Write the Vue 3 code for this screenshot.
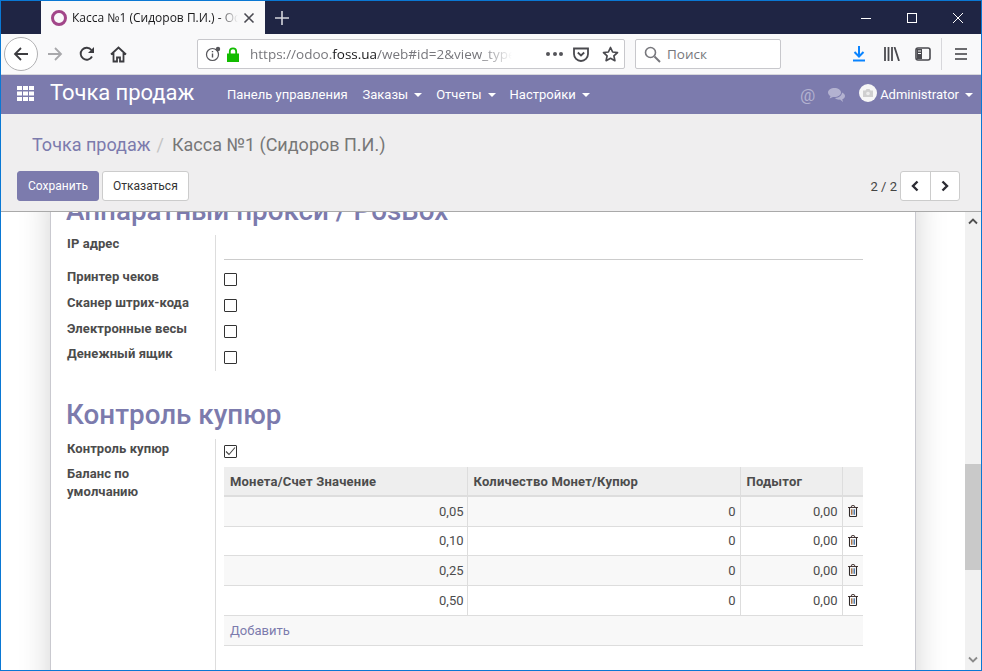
<script setup>
const menus = ['Заказы', 'Отчеты', 'Настройки']
const toggles = ['Принтер чеков', 'Сканер штрих-кода', 'Электронные весы', 'Денежный ящик']
const coins = [
  { value: '0,05', count: '0', total: '0,00' },
  { value: '0,10', count: '0', total: '0,00' },
  { value: '0,25', count: '0', total: '0,00' },
  { value: '0,50', count: '0', total: '0,00' }
]
</script>

<template>
  <div class="window">
    <div class="tabbar">
      <div class="tab">
        <span class="favicon"></span>
        <span class="tab-title">Касса №1 (Сидоров П.И.) - Odoo</span>
        <svg class="tab-close" width="12" height="12" viewBox="0 0 12 12"><path d="M1.5 1.5l9 9M10.5 1.5l-9 9" stroke="#4a4a52" stroke-width="1.6" fill="none"/></svg>
      </div>
      <svg class="tab-new" width="14" height="14" viewBox="0 0 14 14"><path d="M7 0v14M0 7h14" stroke="#d4d5dc" stroke-width="1.6" fill="none"/></svg>
      <div class="win-controls">
        <svg width="12" height="12" viewBox="0 0 12 12"><path d="M1 6.500h10" stroke="#fff" fill="none"/></svg>
        <svg width="12" height="12" viewBox="0 0 12 12"><rect x="1.5" y="1.5" width="9" height="9" stroke="#fff" fill="none"/></svg>
        <svg width="12" height="12" viewBox="0 0 12 12"><path d="M1 1l10 10M11 1L1 11" stroke="#fff" fill="none"/></svg>
      </div>
    </div>

    <div class="toolbar">
      <button class="back">
        <svg width="16" height="16" viewBox="0 0 16 16"><path d="M15 8H2M8 2L2 8l6 6" stroke="#3c3c40" stroke-width="1.8" fill="none"/></svg>
      </button>
      <svg class="forward" width="16" height="16" viewBox="0 0 16 16"><path d="M1 8h13M8 2l6 6-6 6" stroke="#a8a8ab" stroke-width="1.8" fill="none"/></svg>
      <svg class="reload" width="16" height="16" viewBox="0 0 16 16"><path d="M13 10.5A6 6 0 1 1 12.4 4" stroke="#3c3c40" stroke-width="1.9" fill="none"/><path d="M15 1v6H9z" fill="#3c3c40"/></svg>
      <svg class="home" width="17" height="17" viewBox="0 0 17 17"><path d="M1 8.500L8.500 1.500 16 8.500M3.500 7v8.500h3.500v-4h3v4h3.500V7" stroke="#3c3c40" stroke-width="1.800" fill="none"/></svg>

      <div class="urlbar">
        <svg class="info" width="16" height="16" viewBox="0 0 16 16"><circle cx="7.500" cy="8.500" r="6" stroke="#55555a" stroke-width="1.200" fill="none"/><path d="M7.500 7.500v4M7.500 5v1.300" stroke="#55555a" stroke-width="1.400"/><circle cx="13" cy="3" r="2.200" fill="#55555a"/></svg>
        <svg class="lock" width="14" height="15" viewBox="0 0 14 15"><path d="M1 6.500h12V15H1z" fill="#12bc00"/><path d="M3.800 7V4.500a3.200 3.200 0 0 1 6.400 0V7" stroke="#12bc00" stroke-width="1.800" fill="none"/></svg>
        <span class="url">https://odoo.<b>foss.ua</b>/web#id=2&amp;view_type=form</span>
        <span class="dots"><i></i><i></i><i></i></span>
        <svg class="pocket" width="16" height="15" viewBox="0 0 16 15"><path d="M1 1.500h14v5.500a7 7 0 0 1-14 0z" stroke="#4a4a4f" stroke-width="1.800" fill="none"/><path d="M4.800 5.500L8 8.500l3.200-3" stroke="#4a4a4f" stroke-width="1.800" fill="none"/></svg>
        <svg class="star" width="17" height="16" viewBox="0 0 17 16"><path d="M8.500 1.500l2.100 4.500 4.900.6-3.600 3.300 1 4.800-4.400-2.400-4.400 2.400 1-4.800L1.500 6.600l4.900-.6z" stroke="#4a4a4f" stroke-width="1.700" fill="none" stroke-linejoin="round"/></svg>
      </div>

      <div class="searchbar">
        <svg width="17" height="17" viewBox="0 0 17 17"><circle cx="6.500" cy="6.500" r="5" stroke="#77777c" stroke-width="1.600" fill="none"/><path d="M10.500 10.500L16 16" stroke="#77777c" stroke-width="2" fill="none"/></svg>
        <span>Поиск</span>
      </div>

      <svg class="download" width="14" height="16" viewBox="0 0 14 16"><path d="M7 0v10M2.500 6L7 10.500 11.500 6" stroke="#0a84ff" stroke-width="2" fill="none"/><path d="M1 14.500h12" stroke="#0a84ff" stroke-width="2" fill="none"/></svg>
      <svg class="library" width="16" height="14" viewBox="0 0 16 14"><path d="M1 0v14M4.500 0v14M8 0v14M10.500 0L15 14" stroke="#4a4a4f" stroke-width="1.800" fill="none"/></svg>
      <svg class="sidebar" width="16" height="14" viewBox="0 0 16 14"><rect x="1" y="1" width="14" height="12" rx="2" stroke="#4a4a4f" stroke-width="1.600" fill="none"/><path d="M2 2h5v10H2z" fill="#4a4a4f"/><path d="M3 4h3M3 6.500h3" stroke="#f9f9fa"/></svg>
      <span class="tool-divider"></span>
      <svg class="burger" width="12" height="12" viewBox="0 0 12 12"><path d="M0 1h12M0 6h12M0 11h12" stroke="#3c3c40" stroke-width="1.700" fill="none"/></svg>
    </div>

    <nav class="navbar">
      <svg class="apps" width="17" height="15" viewBox="0 0 17 15">
        <g fill="#fff">
          <rect x="0" y="0" width="5" height="4" /><rect x="6" y="0" width="5" height="4" /><rect x="12" y="0" width="5" height="4" />
          <rect x="0" y="5.500" width="5" height="4" /><rect x="6" y="5.500" width="5" height="4" /><rect x="12" y="5.500" width="5" height="4" />
          <rect x="0" y="11" width="5" height="4" /><rect x="6" y="11" width="5" height="4" /><rect x="12" y="11" width="5" height="4" />
        </g>
      </svg>
      <span class="brand">Точка продаж</span>
      <a class="nav-link dashboard">Панель управления</a>
      <a v-for="m in menus" :key="m" class="nav-link">{{ m }}<i class="caret"></i></a>
      <div class="nav-right">
        <span class="at">@</span>
        <svg class="chat" width="17" height="14" viewBox="0 0 17 14"><path d="M6.500 0C3 0 0 1.900 0 4.500 0 6 1 7.300 2.500 8.100L1.500 10.500 5 8.900c.5.100 1 .100 1.500.100 3.500 0 6.500-2 6.500-4.500S10 0 6.500 0z" fill="#b3b2d0"/><path d="M14 4.500c0 3-3 5.300-7 5.500.9 1 2.500 1.700 4.200 1.700l.800-.1L15 14l-.700-2.800c1.600-.7 2.700-1.900 2.700-3.300 0-1.400-1.200-2.700-3-3.400z" fill="#b3b2d0"/></svg>
        <span class="avatar"><svg width="10" height="8" viewBox="0 0 10 8"><path d="M0 1.500h2.500L3.500 0h3l1 1.500H10V8H0z" fill="#cfcfcf"/><circle cx="5" cy="4.500" r="1.800" fill="#ececec"/></svg></span>
        <span class="user">Administrator<i class="caret"></i></span>
      </div>
    </nav>

    <div class="control-panel">
      <div class="breadcrumb">
        <a>Точка продаж</a><span class="slash">/</span><span class="current">Касса №1 (Сидоров П.И.)</span>
      </div>
      <div class="cp-row">
        <button class="btn primary">Сохранить</button>
        <button class="btn">Отказаться</button>
        <span class="pager-label">2 / 2</span>
        <div class="pager">
          <button><svg width="10" height="12" viewBox="0 0 10 12"><path d="M7.500 1.500L3 6l4.500 4.500" stroke="#2b2b33" stroke-width="2.400" fill="none"/></svg></button>
          <button><svg width="10" height="12" viewBox="0 0 10 12"><path d="M2.500 1.500L7 6l-4.500 4.500" stroke="#2b2b33" stroke-width="2.400" fill="none"/></svg></button>
        </div>
      </div>
    </div>

    <div class="content">
      <div class="scroll-area">
        <div class="sheet">
          <h2 class="first-title">Аппаратный прокси / PosBox</h2>
          <div class="group">
            <div class="row ip-row">
              <label>IP адрес</label>
              <div class="ip-input"></div>
            </div>
            <div v-for="t in toggles" :key="t" class="row check-row">
              <label>{{ t }}</label>
              <div class="field"><span class="check"></span></div>
            </div>
          </div>

          <h2 class="second-title">Контроль купюр</h2>
          <div class="group">
            <div class="row check-row control-row">
              <label>Контроль купюр</label>
              <div class="field">
                <span class="check">
                  <svg width="11" height="11" viewBox="0 0 11 11"><path d="M1 5.500L4 8.500 10 1.500" stroke="#444" stroke-width="1.100" fill="none"/></svg>
                </span>
              </div>
            </div>
            <div class="row table-row">
              <label>Баланс по умолчанию</label>
              <div class="table-wrap">
                <table>
                  <thead>
                    <tr>
                      <th class="c1">Монета/Счет Значение</th>
                      <th class="c2">Количество Монет/Купюр</th>
                      <th class="c3">Подытог</th>
                      <th class="c4"></th>
                    </tr>
                  </thead>
                  <tbody>
                    <tr v-for="c in coins" :key="c.value">
                      <td>{{ c.value }}</td>
                      <td>{{ c.count }}</td>
                      <td>{{ c.total }}</td>
                      <td class="trash">
                        <svg width="10" height="12" viewBox="0 0 10 12"><path d="M0 2.500h10M3 2.300L3.800.6h2.400L7 2.300" stroke="#4a3a38" stroke-width="1" fill="none"/><path d="M1.500 2.500v8.200c0 .5.300.8.800.8h5.400c.5 0 .8-.3.800-.8V2.500" stroke="#2f2a2a" stroke-width="1.100" fill="none"/><path d="M3.500 4.300v5.500" stroke="#b5743f" stroke-width="1"/><path d="M5 4.300v5.500" stroke="#6a6a70" stroke-width="1"/><path d="M6.500 4.300v5.500" stroke="#4c7fb5" stroke-width="1"/></svg>
                      </td>
                    </tr>
                    <tr class="add-row">
                      <td colspan="4"><a>Добавить</a></td>
                    </tr>
                  </tbody>
                </table>
              </div>
            </div>
          </div>
        </div>
      </div>
      <div class="scrollbar">
        <svg width="10" height="7" viewBox="0 0 10 7"><path d="M1 5.500l4-4 4 4" stroke="#505050" stroke-width="1.800" fill="none"/></svg>
        <div class="track"><div class="thumb"></div></div>
        <svg width="10" height="7" viewBox="0 0 10 7"><path d="M1 1.500l4 4 4-4" stroke="#8a8a8a" stroke-width="1.800" fill="none"/></svg>
      </div>
    </div>
  </div>
</template>

<style>
html, body {
  margin: 0;
  overflow: hidden;
}
</style>

<style scoped>
.window {
  width: 982px;
  height: 671px;
  box-sizing: border-box;
  border: 1px solid #0a78d4;
  display: flex;
  flex-direction: column;
  overflow: hidden;
  font-family: Roboto, sans-serif;
  font-size: 13px;
  color: #4c4c4c;
  background: #fff;
}

button {
  font-family: inherit;
}

/* browser chrome */
.tabbar {
  height: 33px;
  flex: none;
  background: #1f2544;
  display: flex;
  align-items: stretch;
  padding-left: 40px;
}
.tab {
  width: 224px;
  background: #f9f9fa;
  display: flex;
  align-items: center;
  padding-left: 10px;
  box-sizing: border-box;
  font-family: "Open Sans", sans-serif;
  font-size: 12px;
  color: #18181a;
}
.favicon {
  width: 10px;
  height: 10px;
  border: 3px solid #a24689;
  border-radius: 50%;
  flex: none;
}
.tab-title {
  margin-left: 5px;
  width: 166px;
  white-space: nowrap;
  overflow: hidden;
  -webkit-mask-image: linear-gradient(to right, #000 88%, transparent 100%);
  mask-image: linear-gradient(to right, #000 88%, transparent 100%);
}
.tab-close {
  margin-left: 5px;
  flex: none;
}
.tab-new {
  align-self: center;
  margin-left: 10px;
}
.win-controls {
  margin-left: auto;
  display: flex;
  align-items: center;
  gap: 34px;
  padding-right: 17px;
}
.toolbar {
  height: 41px;
  flex: none;
  background: #f9f9fa;
  border-bottom: 1px solid #d7d7db;
  box-sizing: border-box;
  display: flex;
  align-items: center;
  padding-left: 3px;
}
.back {
  width: 34px;
  height: 34px;
  border-radius: 50%;
  border: 1px solid #b1b1b3;
  background: #fff;
  padding: 0;
  display: flex;
  align-items: center;
  justify-content: center;
}
.forward { margin-left: 9px; }
.reload { margin-left: 16px; }
.home { margin-left: 15px; }
.urlbar {
  margin-left: 70px;
  width: 428px;
  height: 30px;
  box-sizing: border-box;
  background: #fff;
  border: 1px solid #c8c8cc;
  border-radius: 2px;
  display: flex;
  align-items: center;
  padding-left: 7px;
}
.lock { margin-left: 5px; flex: none; }
.info { flex: none; }
.url {
  margin-left: 10px;
  width: 262px;
  font-family: "Open Sans", sans-serif;
  font-size: 13.500px;
  color: #77777c;
  white-space: nowrap;
  overflow: hidden;
  -webkit-mask-image: linear-gradient(to right, #000 88%, transparent 100%);
  mask-image: linear-gradient(to right, #000 88%, transparent 100%);
}
.url b {
  font-weight: 400;
  color: #18181a;
}
.dots {
  margin-left: 34px;
  display: flex;
  gap: 2.500px;
}
.dots i {
  width: 4px;
  height: 4px;
  border-radius: 50%;
  background: #55555a;
}
.pocket { margin-left: 10px; flex: none; }
.star { margin-left: 13px; flex: none; }
.searchbar {
  margin-left: 10px;
  width: 146px;
  height: 30px;
  box-sizing: border-box;
  background: #fff;
  border: 1px solid #c8c8cc;
  border-radius: 2px;
  display: flex;
  align-items: center;
  padding-left: 8px;
  gap: 6px;
  font-family: "Open Sans", sans-serif;
  font-size: 13.500px;
  color: #77777c;
}
.download { margin-left: 71px; flex: none; }
.library { margin-left: 18px; flex: none; }
.sidebar { margin-left: 15px; flex: none; }
.tool-divider {
  width: 1px;
  height: 32px;
  background: #d7d7db;
  margin-left: 10px;
}
.burger { margin-left: 13px; flex: none; }

/* odoo navbar */
.navbar {
  height: 39px;
  flex: none;
  background: #7c7bad;
  display: flex;
  align-items: center;
  color: #fff;
  padding-left: 16px;
}
.apps { flex: none; margin-top: -3px; }
.brand {
  margin-left: 16px;
  font-size: 22px;
  letter-spacing: -.05px;
  margin-top: -4px;
  white-space: nowrap;
  width: 177px;
}
.nav-link {
  white-space: nowrap;
  margin-right: 14px;
  margin-top: -1px;
}
.nav-link.dashboard { margin-right: 15px; }
.caret {
  display: inline-block;
  width: 0;
  height: 0;
  margin-left: 6px;
  vertical-align: middle;
  border-top: 4px solid #fff;
  border-left: 4px solid transparent;
  border-right: 4px solid transparent;
}
.nav-right {
  margin-left: auto;
  display: flex;
  align-items: center;
  padding-right: 8px;
}
.at {
  font-size: 17px;
  color: #b3b2d0;
  margin-right: 13px;
}
.chat { margin-right: 14px; }
.avatar {
  width: 18px;
  height: 18px;
  border-radius: 50%;
  background: #f6f6f6;
  display: flex;
  align-items: center;
  justify-content: center;
  margin-right: 3px;
  margin-top: -3px;
}
.user { white-space: nowrap; margin-top: -1px; }

/* control panel */
.control-panel {
  height: 98px;
  flex: none;
  box-sizing: border-box;
  background: #efeeef;
  border-bottom: 1px solid #a9a9a9;
  padding: 18px 21px 0 16px;
}
.breadcrumb {
  font-size: 18px;
  line-height: 26px;
  padding-left: 15px;
  white-space: nowrap;
}
.breadcrumb a { color: #7c7bad; }
.slash {
  color: #c4c4c4;
  margin: 0 8px 0 6px;
}
.current { color: #777; }
.cp-row {
  margin-top: 13px;
  display: flex;
  align-items: center;
}
.btn {
  height: 30px;
  box-sizing: border-box;
  padding: 0 10px;
  font-size: 12px;
  border-radius: 3px;
  border: 1px solid #ccc;
  background: #fff;
  color: #333;
  margin-right: 3px;
}
.btn.primary {
  width: 82px;
  background: #7c7bad;
  border-color: #7c7bad;
  color: #fff;
}
.pager-label {
  margin-left: auto;
  margin-right: 3px;
  color: #444;
}
.pager {
  display: flex;
  width: 60px;
  height: 30px;
  box-sizing: border-box;
  border: 1px solid #ccc;
  border-radius: 3px;
  background: #fff;
  overflow: hidden;
}
.pager button {
  flex: 1;
  padding: 0;
  border: none;
  background: transparent;
  display: flex;
  align-items: center;
  justify-content: center;
}
.pager button + button {
  border-left: 1px solid #ccc;
}

/* form */
.content {
  flex: 1;
  min-height: 0;
  display: flex;
  background: #fff;
}
.scroll-area {
  flex: 1;
  min-width: 0;
  overflow: hidden;
  padding: 0 49px;
}
.sheet {
  height: 620px;
  margin-top: -22px;
  box-sizing: border-box;
  background: #fff;
  border-left: 1px solid #c9c9cf;
  border-right: 1px solid #c9c9cf;
  box-shadow: 0 0 30px rgba(0, 0, 0, .18);
  padding: 0 52px 0 15px;
}
h2 {
  margin: 0;
  font-size: 27.800px;
  font-weight: 500;
  line-height: 34px;
  color: #7c7bad;
}
.first-title { padding-top: 4px; }
.second-title { margin-top: 27px; }
.group {
  margin-top: 7px;
}
.row {
  display: flex;
}
.row label {
  width: 150px;
  box-sizing: border-box;
  flex: none;
  font-weight: 700;
  letter-spacing: .08px;
  color: #4c4c4c;
  line-height: 18px;
  border-right: 1px solid #ddd;
  padding: 0 16px 0 1px;
}
.ip-row {
  height: 32px;
}
.ip-input {
  flex: 1;
  margin-left: 8px;
  height: 24px;
  border-bottom: 1px solid #ccc;
}
.check-row {
  height: 26px;
}
.check-row label { padding-top: 1px; }
.check-row:last-child label { padding-top: 0; }
.field {
  flex: 1;
  padding: 6px 0 0 8px;
}
.check {
  display: flex;
  align-items: center;
  justify-content: center;
  box-sizing: border-box;
  width: 13px;
  height: 13px;
  border: 1px solid #333;
  border-radius: 1px;
  background: #fff;
}
.control-row label { padding-top: 1px; }
.table-row label { height: 210px; padding-top: 0; }
.table-wrap {
  flex: 1;
  margin-left: 8px;
  padding-top: 2px;
}
table {
  width: 100%;
  border-collapse: collapse;
  table-layout: fixed;
  font-size: 13px;
}
th {
  height: 29px;
  box-sizing: border-box;
  padding: 0 6px;
  text-align: left;
  font-weight: 700;
  letter-spacing: .2px;
  background: #eee;
  color: #4c4c4c;
  border-right: 1px solid #ddd;
  border-bottom: 2px solid #ddd;
}
th.c1 { width: 243px; }
th.c2 { width: 273px; }
th.c3 { width: 102px; }
th.c4 { border-right: none; }
td {
  height: 30px;
  box-sizing: border-box;
  padding: 0 4px 0 6px;
  text-align: right;
  color: #4c4c4c;
  border-right: 1px solid #ddd;
  border-bottom: 1px solid #ddd;
  background: #fff;
}
td:first-child { padding-right: 3px; }
td:last-child { border-right: none; }
tbody tr:nth-child(2) td { height: 29px; }
tbody tr:nth-child(odd) td { background: #f8f8f8; }
.trash {
  padding: 0;
  text-align: center;
}
.trash svg { display: block; margin: 0 auto 0 5px; }
.add-row td {
  text-align: left;
  background: #f8f8f8;
}
.add-row a { color: #7c7bad; }

/* scrollbar */
.scrollbar {
  width: 16px;
  flex: none;
  background: #f1f1f1;
  display: flex;
  flex-direction: column;
  align-items: center;
  padding: 6px 0 7px;
  box-sizing: border-box;
}
.track {
  flex: 1;
  width: 100%;
  position: relative;
}
.thumb {
  position: absolute;
  left: 0;
  right: 0;
  top: 239px;
  height: 106px;
  background: #c9c9c9;
}
</style>
